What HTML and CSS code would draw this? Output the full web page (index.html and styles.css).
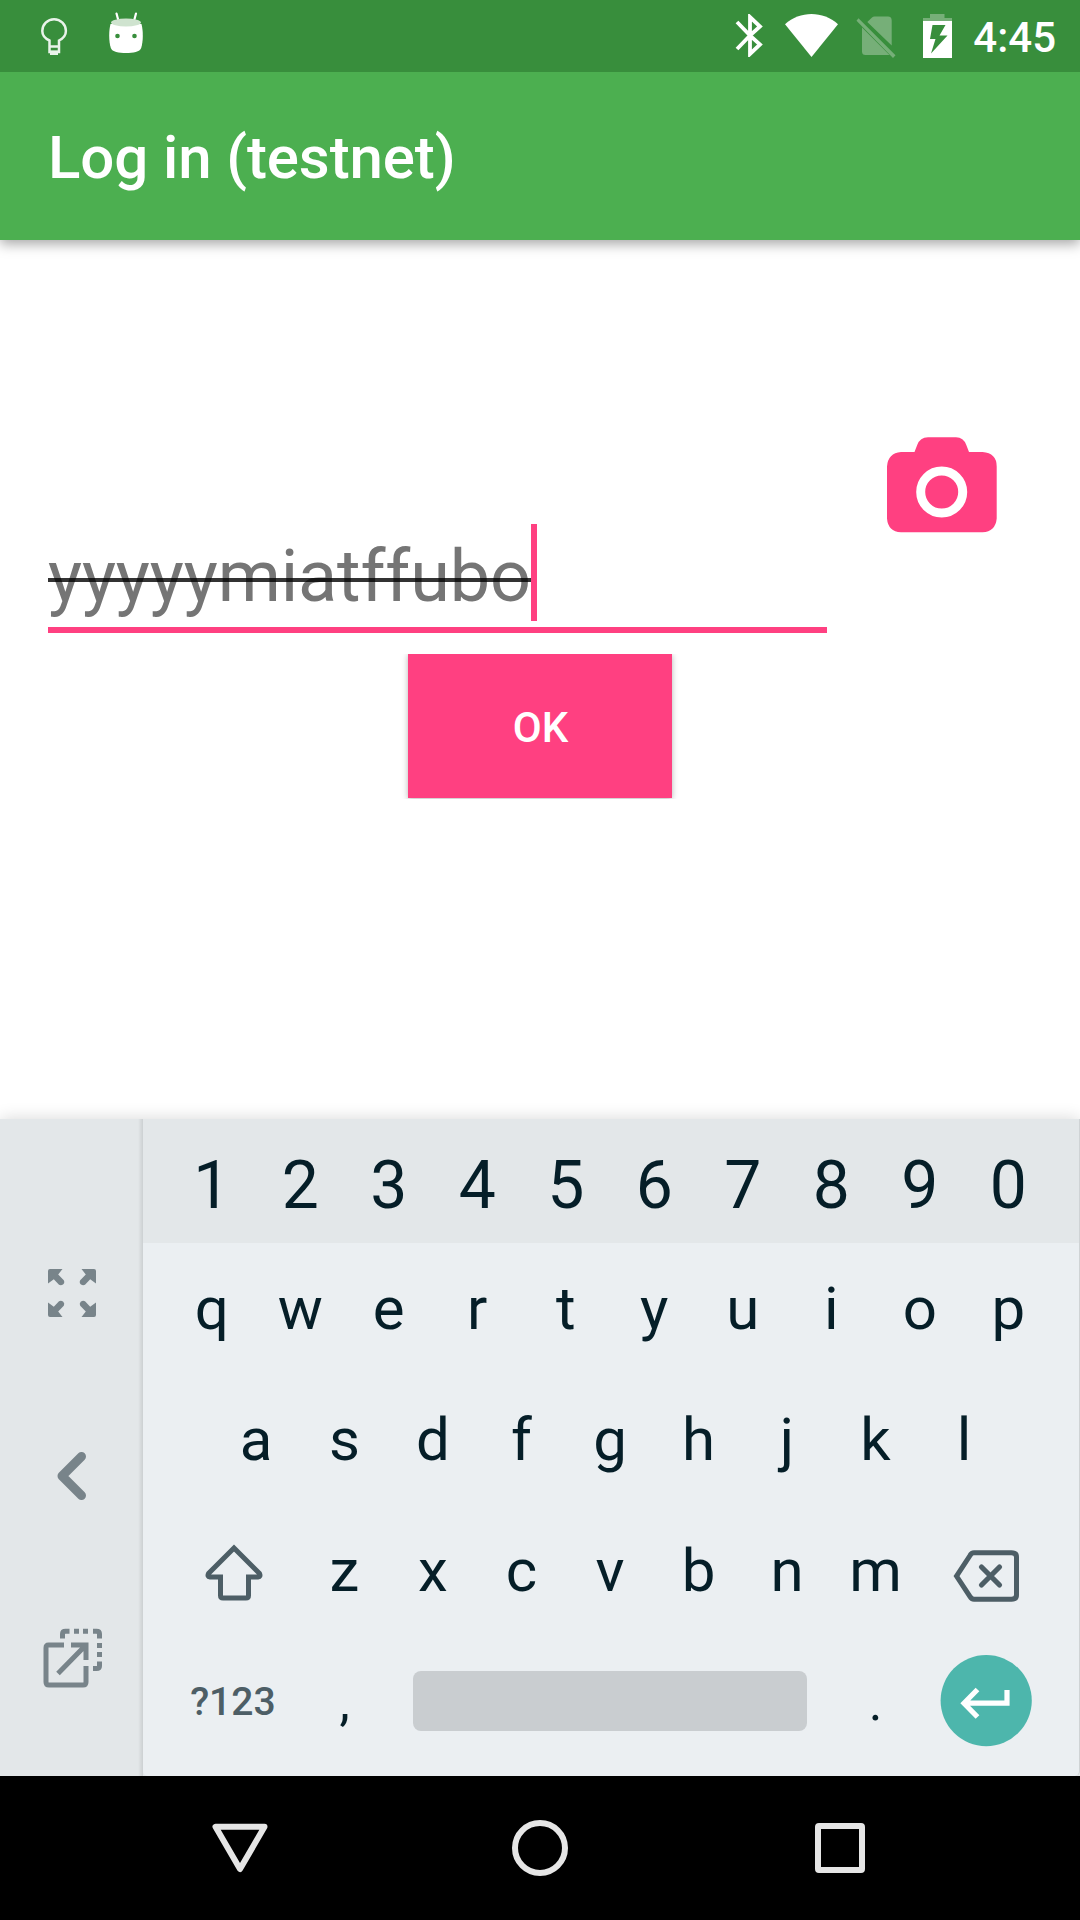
FILE: index.html
```html
<!DOCTYPE html>
<html lang="en">
<head>
<meta charset="utf-8">
<title>Log in (testnet)</title>
<link rel="stylesheet" href="styles.css">
</head>
<body>
<div class="screen">
  <header class="status-bar">
    <svg class="bulb" viewBox="40 17 28 39" width="28" height="39">
      <path d="M49.500 42V40.500C45 38.500 42.300 35 42.300 31A11.800 11.800 0 0 1 65.900 31C65.900 35 63 38.500 59 40.500V52H49.500V42M49 46.500H59.500" fill="none" stroke="#e9f3ea" stroke-width="2.500"/>
      <path d="M50 50.500H58V55H50Z" fill="#e9f3ea"/>
    </svg>
    <svg class="droid" viewBox="108 12 36 42" width="36" height="42">
      <path d="M116.500 13.500L118.500 21M136 13.500L134 21" stroke="#fff" stroke-width="2.200" stroke-linecap="round"/>
      <path d="M110.500 24C108.700 31 108.700 41 110.800 48C112 51.800 119 53 126 53S140 51.800 141.200 48C143.300 41 143.300 31 141.500 24Z" fill="#fff"/>
      <ellipse cx="126" cy="22.500" rx="15" ry="4" fill="#cfe3cf"/>
      <circle cx="117.500" cy="36" r="2.300" fill="#388e3c"/><circle cx="134.500" cy="36" r="2.300" fill="#388e3c"/>
    </svg>
    <div class="status-right">
      <svg viewBox="735 15 28 43" width="28" height="43">
        <path d="M737 23L750 36.500L737 50M750 36.500V18L760 27.500L750 36.500ZM750 36.500V55L760 45.500Z" fill="none" stroke="#fff" stroke-width="3.800"/>
      </svg>
      <svg class="wifi" viewBox="785 14 53 43" width="53" height="43">
        <path d="M785 24.200C800 10.600 823 10.600 838 24.200L811.500 57Z" fill="#fff"/>
      </svg>
      <svg class="sim" viewBox="856 16 40 42" width="40" height="42">
        <g fill="#76af78"><path d="M867.300 22L872 17.500Q873 16.500 874.500 16.500H888Q891.700 16.500 891.700 20.500V45.500ZM862 27.500L889.500 55H865.500Q862 55 862 51.500Z"/><path d="M858.500 18.300L895.500 55.300L893 58L856.500 20.800Z"/></g>
      </svg>
      <svg class="battery" viewBox="923 14 29 44" width="29" height="44">
        <path d="M930 14H944.500V18H952V21H923V18H930Z" fill="#76af78"/>
        <path fill-rule="evenodd" d="M923 21H952V58H923ZM932.500 25L930 39H935.500L931 53.500L947.500 35.500H939.500L945.500 25Z" fill="#fff"/>
      </svg>
      <span class="clock">4:45</span>
    </div>
  </header>
  <div class="app-bar"><h1 class="title">Log in (testnet)</h1></div>

  <main class="content">
    <div class="entry-row">
      <div class="field"><span class="typed">yyyyymiatffubo</span><span class="caret"></span></div>
      <svg class="camera" viewBox="887 437 110 96" width="110" height="96">
        <path d="M901 452H914.500L917.200 445Q920 437.200 928 437.200H956Q963.500 437.200 966.300 445L969 452H982.500Q996.700 453 996.700 466.500V518.500Q995.500 531.500 982.500 532.300H901Q888 531.500 887 518.500V466.500Q888 453 901 452Z" fill="#ff4081"/>
        <circle cx="941.700" cy="492" r="21" fill="none" stroke="#fff" stroke-width="9"/>
      </svg>
    </div>
    <button class="ok">OK</button>
  </main>

  <section class="keyboard">
    <aside class="side">
      <svg viewBox="48 1269 48 48" width="48" height="48">
        <g fill="#78848a"><path id="corner" d="M50 1269H62.500L58.200 1274.500L63.800 1280.200Q65 1282.500 63.300 1284.300Q61 1286 59 1284.800L53.800 1279.300L48 1283.500V1271Q48 1269 50 1269Z"/>
        <use href="#corner" transform="translate(144 0) scale(-1 1)"/><use href="#corner" transform="translate(0 2586) scale(1 -1)"/><use href="#corner" transform="translate(144 2586) scale(-1 -1)"/></g>
      </svg>
      <svg class="back" viewBox="57 1452 30 48" width="30" height="48"><path d="M81.500 1456.500L62 1476L81.500 1495.500" fill="none" stroke="#78848a" stroke-width="9" stroke-linecap="round" stroke-linejoin="round"/></svg>
      <svg class="float" viewBox="43 1628 60 60" width="60" height="60">
        <g fill="none" stroke="#78848a" stroke-width="5">
          <path d="M64 1645H48.500Q46 1645 46 1648V1682Q46 1685 49 1685H83Q86 1685 86 1682V1666M71 1645H86V1660M58 1673.500L84 1647M62.500 1638.500V1634Q62.500 1631.300 65.500 1631.300H69.500M74 1631.300H79M83 1631.300H88M93 1631.300H96.500Q99.500 1631.300 99.500 1634V1638.500M99.500 1643V1648M99.500 1652V1657M99.500 1661.500V1666Q99.500 1668.500 96.500 1668.500H93"/>
        </g>
      </svg>
    </aside>
    <div class="keys">
      <div class="row numbers"><span>1</span><span>2</span><span>3</span><span>4</span><span>5</span><span>6</span><span>7</span><span>8</span><span>9</span><span>0</span></div>
      <div class="row"><span>q</span><span>w</span><span>e</span><span>r</span><span>t</span><span>y</span><span>u</span><span>i</span><span>o</span><span>p</span></div>
      <div class="row"><span>a</span><span>s</span><span>d</span><span>f</span><span>g</span><span>h</span><span>j</span><span>k</span><span>l</span></div>
      <div class="row">
        <span class="wide"><svg class="shift" viewBox="203 1544 60 58" width="60" height="58"><path d="M233 1548L258.500 1573.500Q260 1576.700 257 1577H247.500V1595.500Q247.500 1598 245 1598H222Q219.500 1598 219.500 1595.500V1577H209Q206 1576.700 207.500 1573.500Z" fill="none" stroke="#4d5e66" stroke-width="5"/></svg></span><span>z</span><span>x</span><span>c</span><span>v</span><span>b</span><span>n</span><span>m</span><span class="wide"><svg class="delete" viewBox="953 1549 67 54" width="67" height="54"><path d="M956.500 1576L970 1555.500Q971.500 1552.700 974 1552.700H1011.500Q1016.500 1552.700 1016.500 1557V1595Q1016.500 1599.300 1011.500 1599.300H974Q971.500 1599.300 970 1596.500Z" fill="none" stroke="#4d5e66" stroke-width="5"/><path d="M981.500 1567L999.500 1585M999.500 1567L981.500 1585" stroke="#4d5e66" stroke-width="5.200" stroke-linecap="round"/></svg></span>
      </div>
      <div class="row bottom">
        <span class="wide symbols">?123</span><span class="mark">,</span><span class="space-key"><i class="space"></i></span><span class="mark">.</span><span class="wide"><svg class="enter" viewBox="941 1655 92 92" width="92" height="92"><circle cx="987.200" cy="1700.600" r="45.600" fill="#4db6ac"/><path d="M978.500 1689.500L965 1703.200L978.500 1717M965 1703.200H1008V1690" fill="none" stroke="#fff" stroke-width="5.200"/></svg></span>
      </div>
    </div>
  </section>

  <nav class="nav-bar">
    <svg viewBox="210 1818 60 60" width="60" height="60"><path d="M215.500 1826.800H264.500L240 1869Z" fill="none" stroke="#e6e6e6" stroke-width="6" stroke-linejoin="round"/></svg>
    <svg viewBox="510 1818 60 60" width="60" height="60"><circle cx="540" cy="1848" r="25" fill="none" stroke="#e6e6e6" stroke-width="6"/></svg>
    <svg viewBox="810 1818 60 60" width="60" height="60"><rect x="818" y="1826" width="44" height="44" rx="1" fill="none" stroke="#e6e6e6" stroke-width="6"/></svg>
  </nav>
</div>
</body>
</html>
```
FILE: styles.css
```css
* { box-sizing: border-box; }
body { margin: 0; background: #fff; font-family: Roboto, sans-serif; }
svg { display: block; flex: none; }

.screen { width: 1080px; height: 1920px; display: flex; flex-direction: column; overflow: hidden; }

.status-bar { height: 72px; flex: none; display: flex; align-items: flex-start; padding-left: 40px; background: #388e3c; }
.bulb { margin-top: 17px; }
.droid { margin: 12px 0 0 40px; }
.status-right { display: flex; margin: 14px 24px 0 auto; }
.wifi { margin-left: 22px; }
.sim { margin: 2px 0 0 18px; }
.battery { margin-left: 27px; }
.clock { margin-left: 21px; font-size: 42px; line-height: 48px; font-weight: 500; color: #fff; }

.app-bar { height: 168px; flex: none; display: flex; align-items: center; padding: 4px 0 0 48px; background: #4caf50; box-shadow: 0 4px 12px rgba(0, 0, 0, .35); clip-path: inset(0 0 -20px 0); }
.title { margin: 0; font-size: 60px; line-height: 70px; font-weight: 500; letter-spacing: -.1px; color: #fff; }

.content { flex: 1; display: flex; flex-direction: column; align-items: center; padding-top: 197px; }
.entry-row { align-self: stretch; display: flex; gap: 60px; padding-left: 48px; }
.field { width: 779px; height: 109px; margin-top: 87px; display: flex; border-bottom: 6px solid #ff4081; }
.typed { position: relative; height: 97px; padding-top: 4px; font-size: 72px; line-height: 97px; letter-spacing: -.14px; color: #757575; font-variant-ligatures: none; }
.typed::after { content: ""; position: absolute; left: 0; right: 0; top: 54px; height: 4px; background: rgba(0, 0, 0, .8); }
.caret { width: 6px; height: 97px; background: #ff4081; }
.ok { width: 264px; height: 144px; margin-top: 21px; padding: 3px 0 0 1px; border: 0; background: #ff4081; color: #fff; font: 500 42px/141px Roboto, sans-serif; box-shadow: 0 1px 6px rgba(0, 0, 0, .3); clip-path: inset(0 -8px -1px -8px); }

.keyboard { height: 657px; flex: none; display: flex; background: #e3e7e9; box-shadow: 0 0 16px rgba(0, 0, 0, .16); }
.side { width: 143px; flex: none; display: flex; flex-direction: column; align-items: center; padding-top: 150px; background: linear-gradient(to right, transparent 138px, rgba(0, 0, 0, .1)); }
.back { margin-top: 135px; }
.float { margin: 128px 0 0 2px; }
.keys { flex: 1; background: #ebeff2; border-right: 1px solid #cfd3d5; border-radius: 0 0 5px 5px; }
.row { height: 131px; display: flex; justify-content: center; padding-right: 2px; font-size: 60px; line-height: 131px; color: #051e28; }
.row > span { width: 88.500px; text-align: center; }
.row > .wide { width: 132.750px; display: flex; justify-content: center; }
.numbers { height: 124px; padding-top: 4px; font-size: 66px; line-height: 125px; background: #e3e7e9; }
.shift { margin-top: 39px; }
.delete { margin: 44px 0 0 1px; }
.bottom { line-height: 129px; }
.row > .mark { font-size: 52px; line-height: 133px; }
.row > .symbols { padding-right: 2px; font-size: 39px; font-weight: 500; line-height: 133px; color: #4d5e66; }
.row > .space-key { width: 442.500px; padding: 35px 24px 0; }
.space { display: block; height: 60px; border-radius: 8px; background: #c9cdd0; }
.enter { margin-top: 19px; }

.nav-bar { height: 144px; flex: none; display: flex; align-items: center; justify-content: center; gap: 240px; background: #000; }
```
